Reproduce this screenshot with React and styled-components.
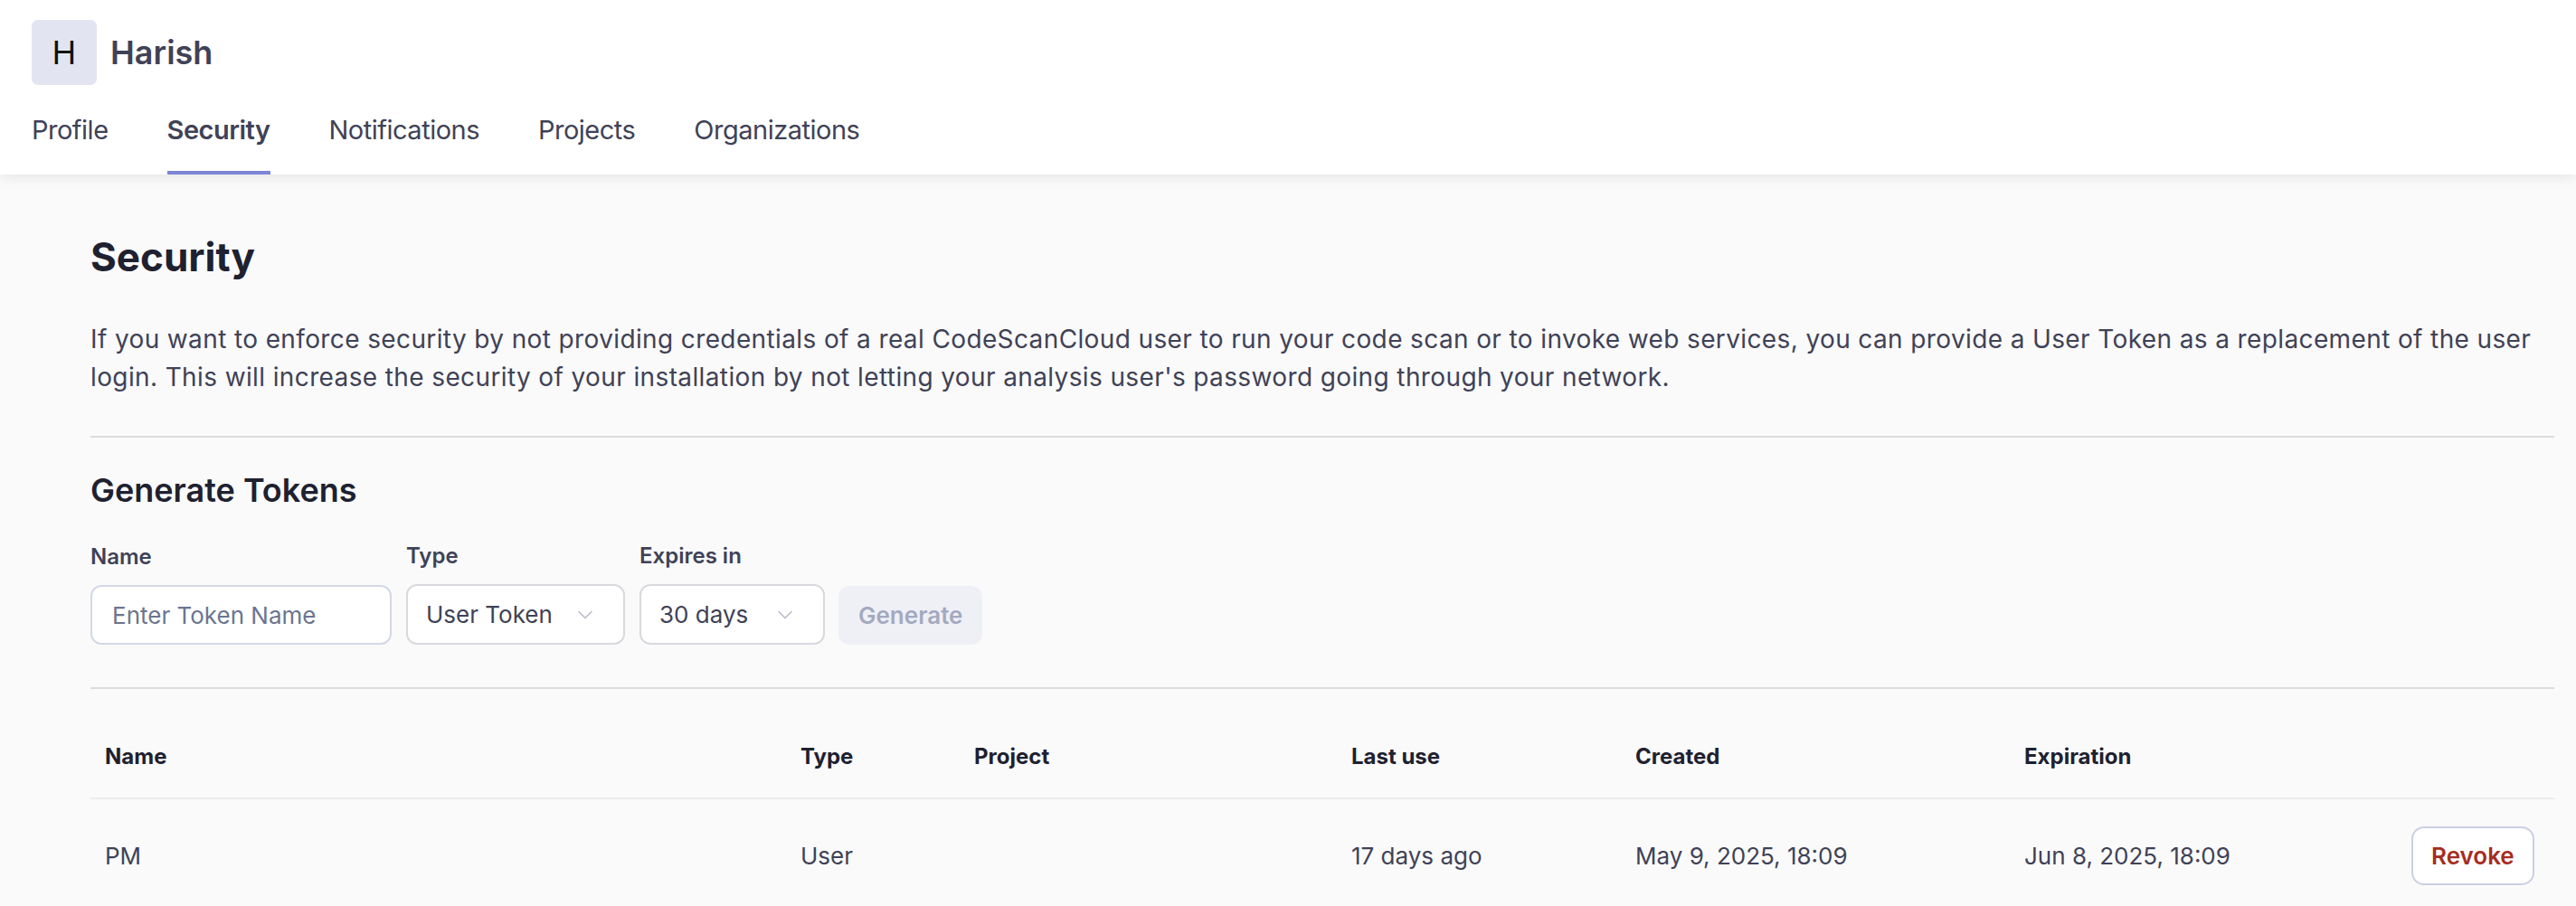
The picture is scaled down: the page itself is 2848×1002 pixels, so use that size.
import React, { useState } from 'react';
import styled, { createGlobalStyle } from 'styled-components';
import { ChevronDown } from 'lucide-react';

const GlobalStyle = createGlobalStyle`
  body {
    margin: 0;
    background: #fafafa;
    font-family: Inter, "Noto Sans", sans-serif;
    color: #3f4257;
  }
`;

const TABS = ['Profile', 'Security', 'Notifications', 'Projects', 'Organizations'];

const COLUMNS = [
  { label: 'Name', width: 769 },
  { label: 'Type', width: 192 },
  { label: 'Project', width: 417 },
  { label: 'Last use', width: 314 },
  { label: 'Created', width: 430 },
  { label: 'Expiration', width: 428 },
  { label: '', width: 174 },
];

const tokens = [
  {
    name: 'PM',
    type: 'User',
    project: '',
    lastUse: '17 days ago',
    created: 'May 9, 2025, 18:09',
    expiration: 'Jun 8, 2025, 18:09',
  },
];

export default function App() {
  const [tab, setTab] = useState('Security');
  const [tokenName, setTokenName] = useState('');

  return (
    <>
      <GlobalStyle />
      <Header>
        <UserRow>
          <Avatar>H</Avatar>
          <UserName>Harish</UserName>
        </UserRow>
        <TabBar>
          {TABS.map((t) => (
            <Tab key={t} $active={t === tab} onClick={() => setTab(t)}>
              {t}
            </Tab>
          ))}
        </TabBar>
      </Header>

      <Main>
        <PageTitle>Security</PageTitle>
        <Intro>
          If you want to enforce security by not providing credentials of a real CodeScanCloud user to run
          your code scan or to invoke web services, you can provide a User Token as a replacement of the user
          login. This will increase the security of your installation by not letting your analysis user's
          password going through your network.
        </Intro>
        <Divider />

        <SectionTitle>Generate Tokens</SectionTitle>
        <FormRow>
          <Field>
            <Label>Name</Label>
            <TextInput
              $width={333}
              placeholder="Enter Token Name"
              value={tokenName}
              onChange={(e) => setTokenName(e.target.value)}
            />
          </Field>
          <Field>
            <Label>Type</Label>
            <Select $width={242}>
              <span>User Token</span>
              <ChevronDown size={28} strokeWidth={1.2} color="#b4b8c4" />
            </Select>
          </Field>
          <Field>
            <Label>Expires in</Label>
            <Select $width={205}>
              <span>30 days</span>
              <ChevronDown size={28} strokeWidth={1.2} color="#b4b8c4" />
            </Select>
          </Field>
          <GenerateButton disabled={!tokenName}>Generate</GenerateButton>
        </FormRow>
        <Divider $space={47} />

        <Table>
          <colgroup>
            {COLUMNS.map((c, i) => (
              <col key={i} style={{ width: c.width }} />
            ))}
          </colgroup>
          <thead>
            <tr>
              {COLUMNS.map((c, i) => (
                <HeadCell key={i}>{c.label}</HeadCell>
              ))}
            </tr>
          </thead>
          <tbody>
            {tokens.map((t) => (
              <tr key={t.name}>
                <Cell>{t.name}</Cell>
                <Cell>{t.type}</Cell>
                <Cell>{t.project}</Cell>
                <Cell>{t.lastUse}</Cell>
                <Cell>{t.created}</Cell>
                <Cell>{t.expiration}</Cell>
                <Cell>
                  <RevokeButton>Revoke</RevokeButton>
                </Cell>
              </tr>
            ))}
          </tbody>
        </Table>
      </Main>
    </>
  );
}

const Header = styled.header`
  background: #ffffff;
  padding: 22px 35px 0;
  box-shadow: 0 3px 14px rgba(0, 0, 0, 0.09);
  position: relative;
  z-index: 1;
`;

const UserRow = styled.div`
  display: flex;
  align-items: center;
  gap: 15px;
`;

const Avatar = styled.div`
  width: 72px;
  height: 72px;
  border-radius: 7px;
  background: #e2e5f1;
  color: #111111;
  font-size: 36px;
  display: flex;
  align-items: center;
  justify-content: center;
`;

const UserName = styled.div`
  font-size: 36px;
  font-weight: 600;
  color: #3f4257;
`;

const TabBar = styled.nav`
  display: flex;
  gap: 65px;
  margin-top: 32px;
`;

const Tab = styled.div`
  font-size: 29px;
  letter-spacing: -0.5px;
  font-weight: ${(p) => (p.$active ? 600 : 400)};
  color: #3f4257;
  padding-bottom: 28px;
  border-bottom: 4px solid ${(p) => (p.$active ? '#7c85d7' : 'transparent')};
  cursor: pointer;
`;

const Main = styled.main`
  padding: 64px 24px 0 100px;
`;

const PageTitle = styled.h1`
  margin: 0;
  font-size: 44px;
  font-weight: 700;
  color: #1e2130;
`;

const Intro = styled.p`
  margin: 43px 0 0;
  font-size: 28px;
  line-height: 42px;
  letter-spacing: 0.38px;
  color: #3f4257;
`;

const Divider = styled.hr`
  border: none;
  height: 2px;
  background: #dcdcdc;
  margin: ${(p) => p.$space || 44}px 0 0;
`;

const SectionTitle = styled.h2`
  margin: 36px 0 0;
  font-size: 36px;
  font-weight: 600;
  color: #1e2130;
`;

const FormRow = styled.div`
  display: flex;
  align-items: flex-end;
  gap: 16px;
  margin-top: 36px;
`;

const Field = styled.div`
  display: flex;
  flex-direction: column;
  gap: 17px;
`;

const Label = styled.label`
  font-size: 24px;
  font-weight: 600;
  color: #3f4257;
`;

const TextInput = styled.input`
  box-sizing: border-box;
  width: ${(p) => p.$width}px;
  height: 66px;
  padding: 0 22px;
  border: 2px solid #d3d8e8;
  border-radius: 12px;
  background: #ffffff;
  font-family: inherit;
  font-size: 26px;
  color: #3f4257;
  outline: none;

  &::placeholder {
    color: #6b7590;
  }
`;

const Select = styled.div`
  box-sizing: border-box;
  width: ${(p) => p.$width}px;
  height: 67px;
  padding: 0 28px 0 20px;
  border: 2px solid #d9d9de;
  border-radius: 12px;
  background: #ffffff;
  display: flex;
  align-items: center;
  justify-content: space-between;
  font-size: 26px;
  color: #3f4257;
`;

const GenerateButton = styled.button`
  height: 65px;
  padding: 0 22px;
  border: none;
  border-radius: 12px;
  background: #eff0f6;
  color: #a3a9c0;
  font-family: inherit;
  font-size: 26px;
  font-weight: 600;
  margin-left: -1px;
`;

const Table = styled.table`
  width: 100%;
  table-layout: fixed;
  border-collapse: collapse;
  margin-top: 28px;
`;

const HeadCell = styled.th`
  text-align: left;
  height: 92px;
  padding: 0 16px;
  font-size: 24px;
  font-weight: 700;
  color: #1e2130;
  border-bottom: 2px solid #ececef;
`;

const Cell = styled.td`
  height: 124px;
  padding: 0 16px;
  font-size: 26px;
  color: #3f4257;
  white-space: nowrap;
`;

const RevokeButton = styled.button`
  height: 65px;
  padding: 0 20px;
  border: 2px solid #cbd0e2;
  border-radius: 14px;
  background: #ffffff;
  color: #a52d21;
  font-family: inherit;
  font-size: 26px;
  font-weight: 600;
`;
